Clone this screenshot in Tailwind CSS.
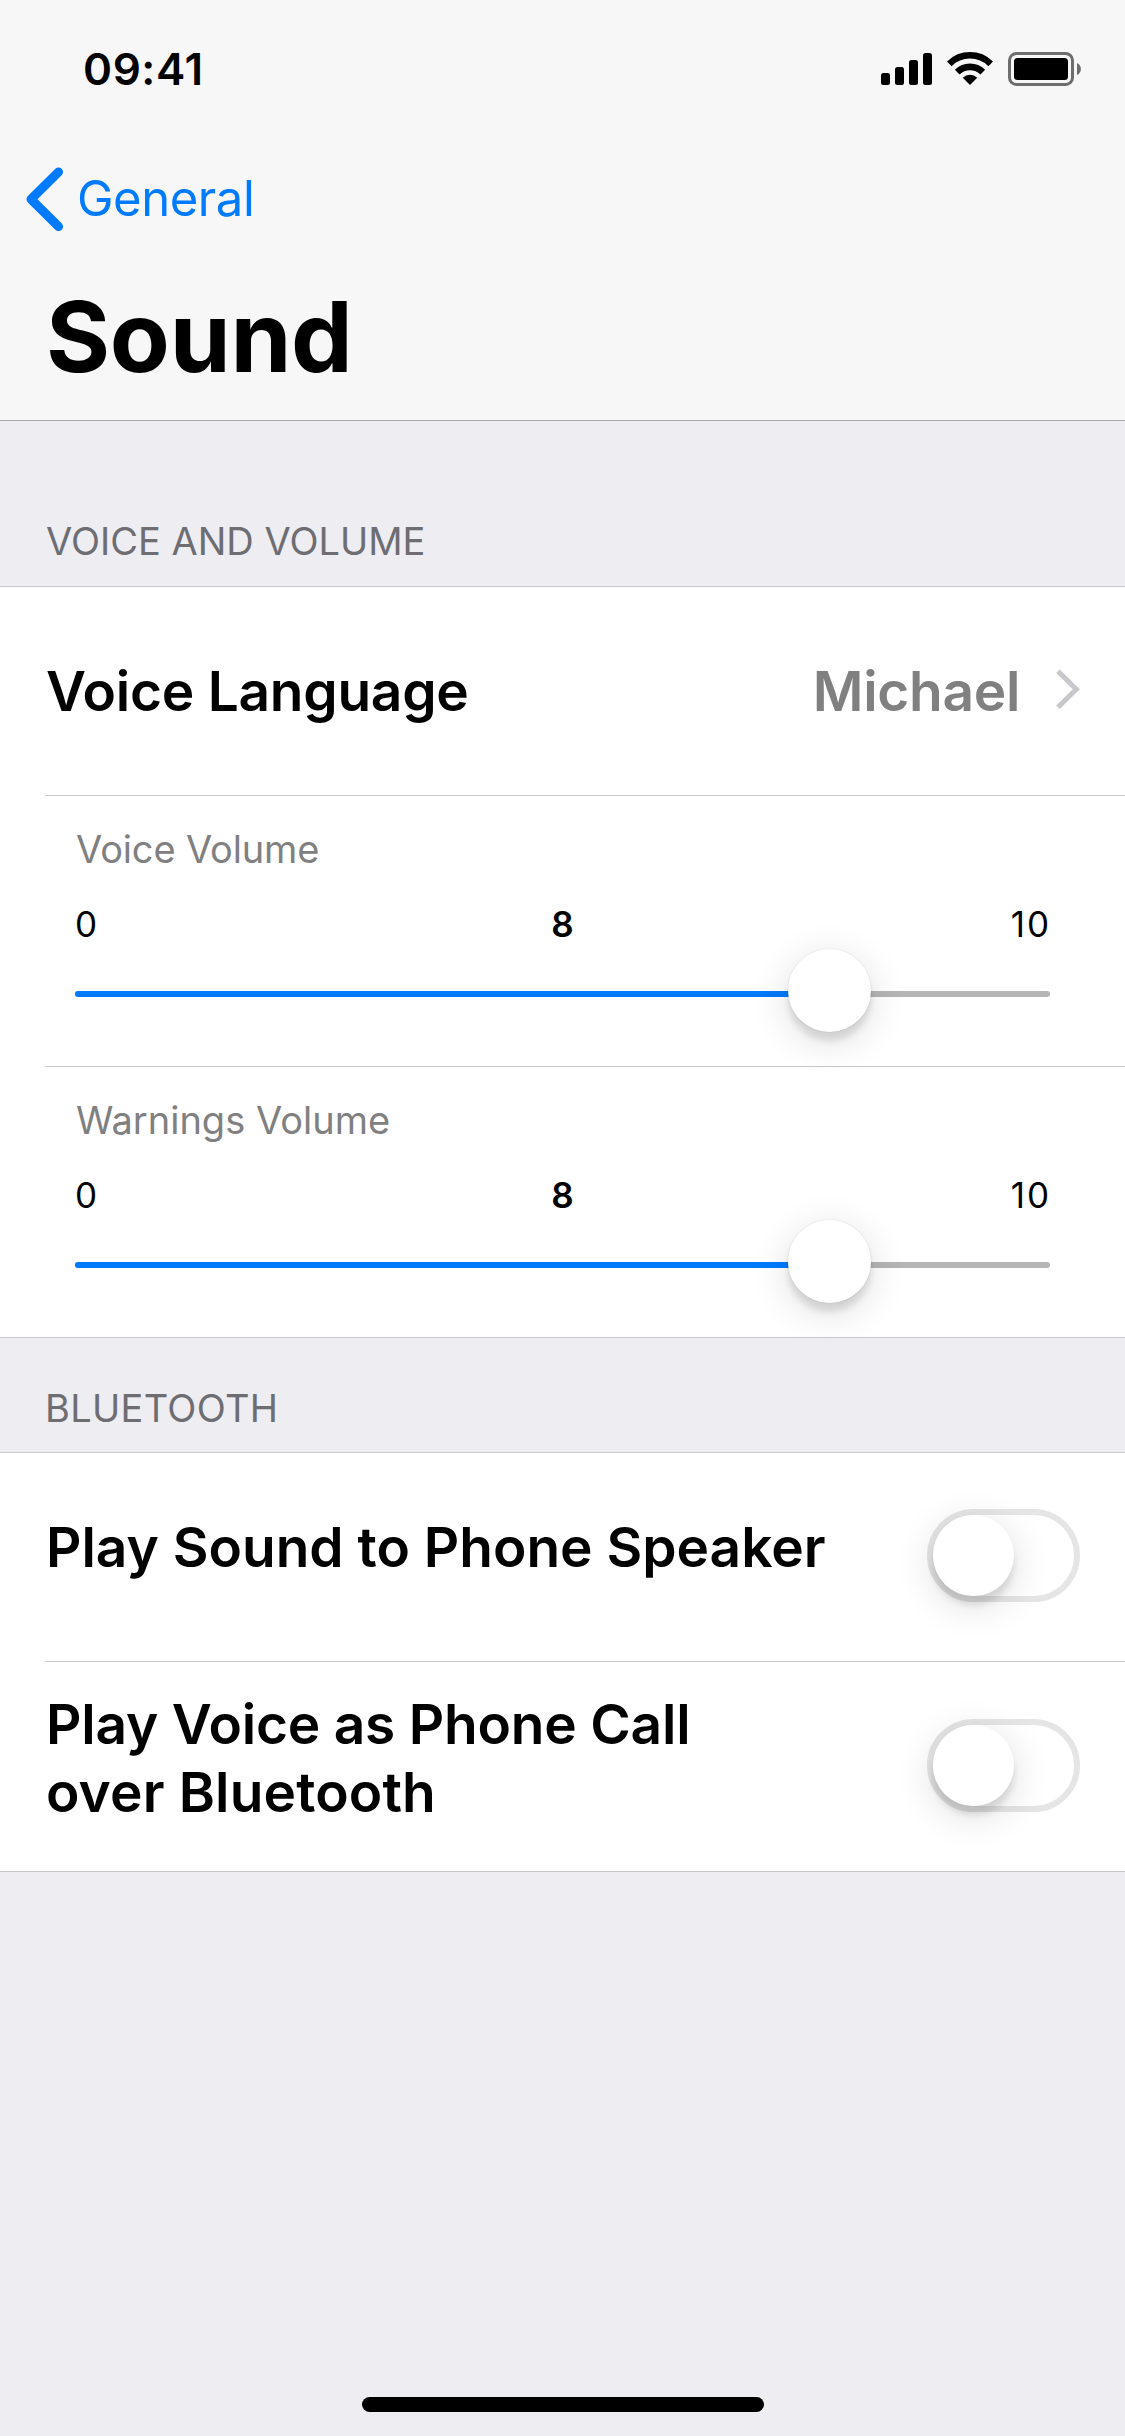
<!DOCTYPE html>
<html lang="en">
<head>
    <meta charset="UTF-8">
    <meta name="viewport" content="width=device-width, initial-scale=1.0">
    <title>Sound</title>
    <script src="https://cdn.jsdelivr.net/npm/@tailwindcss/browser@4"></script>
</head>
<body class="bg-[#eeedf2] text-black font-['Inter','Liberation_Sans',sans-serif]">
    <div class="w-[1125px] h-[2436px] mx-auto flex flex-col overflow-hidden">
        <!-- Header -->
        <header class="h-[421px] bg-[#f7f7f7] border-b border-[#a8a7ab]">
            <!-- Status Bar -->
            <div class="h-[132px] pl-[83px] pr-[43px] flex justify-between items-start">
                <span class="mt-[42px] text-[44px] leading-[54px] font-semibold tracking-[0.6px]">09:41</span>
                <div class="mt-[51px] flex gap-[15px]">
                    <svg class="w-[51px] h-[36px]" viewBox="0 0 51 36" fill="#000">
                        <rect x="0" y="22" width="9" height="12" rx="2.5"/>
                        <rect x="14" y="16" width="9" height="18" rx="2.5"/>
                        <rect x="28" y="9" width="9" height="25" rx="2.5"/>
                        <rect x="42" y="2" width="9" height="32" rx="2.5"/>
                    </svg>
                    <svg class="w-[46px] h-[36px]" viewBox="0 0 46 36" fill="none" stroke="#000" stroke-width="6.6">
                        <path d="M2.3 12.8A29.4 29.4 0 0 1 43.7 12.8"/>
                        <path d="M10.2 21.1A18.2 18.2 0 0 1 35.8 21.1"/>
                        <path d="M23 34L15.8 26.8A10.2 10.2 0 0 1 30.2 26.8Z" fill="#000" stroke="none"/>
                    </svg>
                    <svg class="w-[74px] h-[36px]" viewBox="0 0 74 36">
                        <rect x="1.5" y="2.5" width="63" height="31" rx="7" fill="none" stroke="#6d6d6d" stroke-width="3"/>
                        <rect x="6" y="7" width="54" height="22" rx="3.5" fill="#000"/>
                        <path d="M69 12a6.6 6.6 0 0 1 0 12z" fill="#6d6d6d"/>
                    </svg>
                </div>
            </div>
            <!-- Back -->
            <a class="h-[132px] pt-[34px] pl-6 flex items-start text-[#007aff]">
                <svg class="w-[42px] h-[66px]" viewBox="0 0 42 66" fill="none" stroke="currentColor" stroke-width="9" stroke-linecap="round" stroke-linejoin="round">
                    <path d="M34.5 6L7 33.2L34.5 60.5"/>
                </svg>
                <span class="ml-[11px] mt-[3px] text-[49px] leading-[59px] tracking-[-0.45px]">General</span>
            </a>
            <h1 class="pt-[13px] pl-[46px] text-[98px] leading-[119px] font-bold tracking-[-0.3px]">Sound</h1>
        </header>

        <main>
            <!-- Voice and Volume -->
            <h2 class="h-[165px] pt-[97px] pl-[46px] text-[38px] leading-[46px] text-[#6d6d72]">VOICE AND VOLUME</h2>
            <section class="bg-white border-y border-[#c8c7cc] pl-[45px]">
                <div class="h-[208px] pt-[71px] pl-[1px] pr-[43px] flex items-start text-[55px] leading-[66px] font-semibold">
                    <span class="tracking-[-0.25px]">Voice Language</span>
                    <span class="ml-auto tracking-[-0.3px] text-[#808080]">Michael</span>
                    <svg class="ml-[34px] mt-[9px] w-7 h-11" viewBox="0 0 28 44" fill="none" stroke="#c7c7cc" stroke-width="5">
                        <path d="M4 4.3L22.3 22.3L4 40.3"/>
                    </svg>
                </div>
                <div class="h-[271px] border-t border-[#c8c7cc] pt-[30px] pl-[30px] pr-[75px]">
                    <p class="pl-[1px] text-[38px] leading-[46px] tracking-[-0.15px] text-[#808080]">Voice Volume</p>
                    <div class="mt-[31px] grid grid-cols-3 text-[35px] leading-[42px]">
                        <span>0</span>
                        <span class="text-center font-semibold">8</span>
                        <span class="text-right tracking-[2px] -mr-[1px]">10</span>
                    </div>
                    <div class="relative mt-[46px] h-[6px] rounded-full bg-[#b5b5b5]">
                        <div class="h-full w-[754px] rounded-full bg-[#007aff]"></div>
                        <div class="absolute left-[713px] -top-[42.5px] size-[83px] rounded-full bg-white shadow-[0_0_0_1px_rgba(0,0,0,0.04),0_9px_6px_rgba(0,0,0,0.1),0_9px_39px_rgba(0,0,0,0.14)]"></div>
                    </div>
                </div>
                <div class="h-[271px] border-t border-[#c8c7cc] pt-[30px] pl-[30px] pr-[75px]">
                    <p class="pl-[1px] text-[38px] leading-[46px] text-[#808080]">Warnings Volume</p>
                    <div class="mt-[31px] grid grid-cols-3 text-[35px] leading-[42px]">
                        <span>0</span>
                        <span class="text-center font-semibold">8</span>
                        <span class="text-right tracking-[2px] -mr-[1px]">10</span>
                    </div>
                    <div class="relative mt-[46px] h-[6px] rounded-full bg-[#b5b5b5]">
                        <div class="h-full w-[754px] rounded-full bg-[#007aff]"></div>
                        <div class="absolute left-[713px] -top-[42.5px] size-[83px] rounded-full bg-white shadow-[0_0_0_1px_rgba(0,0,0,0.04),0_9px_6px_rgba(0,0,0,0.1),0_9px_39px_rgba(0,0,0,0.14)]"></div>
                    </div>
                </div>
            </section>

            <!-- Bluetooth -->
            <h2 class="h-[114px] pt-[47px] pl-[45px] text-[38px] leading-[46px] tracking-[0.3px] text-[#6d6d72]">BLUETOOTH</h2>
            <section class="bg-white border-y border-[#c8c7cc] pl-[45px] text-[55px] leading-[68px] font-semibold">
                <div class="h-[208px] pr-[45px] flex justify-between items-start">
                    <span class="mt-[60px] pl-[1px]">Play Sound to Phone Speaker</span>
                    <div class="mt-[56px] w-[153px] h-[93px] rounded-full border-6 border-[#e5e5e5]">
                        <div class="size-[81px] rounded-full bg-white shadow-[0_9px_6px_rgba(0,0,0,0.1),0_9px_39px_rgba(0,0,0,0.14)]"></div>
                    </div>
                </div>
                <div class="h-[210px] border-t border-[#c8c7cc] pr-[45px] flex justify-between items-start">
                    <span class="mt-[28px] pl-[1px]"><span class="tracking-[-0.2px]">Play Voice as Phone Call</span><br><span class="tracking-[0.15px]">over Bluetooth</span></span>
                    <div class="mt-[57px] w-[153px] h-[93px] rounded-full border-6 border-[#e5e5e5]">
                        <div class="size-[81px] rounded-full bg-white shadow-[0_9px_6px_rgba(0,0,0,0.1),0_9px_39px_rgba(0,0,0,0.14)]"></div>
                    </div>
                </div>
            </section>
        </main>

        <!-- Home Indicator -->
        <div class="mt-auto mb-6 mx-auto w-[402px] h-[15px] rounded-full bg-black"></div>
    </div>
</body>
</html>
